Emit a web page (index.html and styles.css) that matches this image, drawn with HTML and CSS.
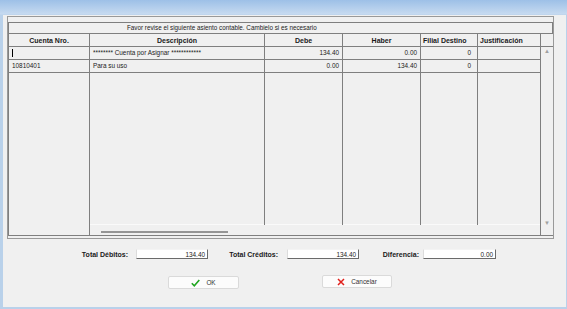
FILE: index.html
```html
<!DOCTYPE html>
<html lang="es">
<head>
    <meta charset="UTF-8">
    <title>Asiento contable</title>
    <link rel="stylesheet" href="styles.css">
</head>
<body>
    <div class="window">
        <div class="client">
            <div class="frame">
                <div class="caption">Favor revise el siguiente asiento contable. Cambielo si es necesario</div>
                <table class="grid">
                    <colgroup>
                        <col style="width:81px">
                        <col style="width:175px">
                        <col style="width:78px">
                        <col style="width:78px">
                        <col style="width:57px">
                        <col style="width:63px">
                        <col style="width:13px">
                    </colgroup>
                    <thead>
                        <tr>
                            <th>Cuenta Nro.</th>
                            <th>Descripción</th>
                            <th>Debe</th>
                            <th>Haber</th>
                            <th class="left">Filial Destino</th>
                            <th class="left">Justificación</th>
                            <th class="sb-head"></th>
                        </tr>
                    </thead>
                    <tbody>
                        <tr class="row">
                            <td><span class="caret"></span></td>
                            <td>******** Cuenta por Asignar ************</td>
                            <td class="num">134.40</td>
                            <td class="num">0.00</td>
                            <td class="num filial">0</td>
                            <td></td>
                            <td class="vscroll" rowspan="4">
                                <div class="vs-inner">
                                    <span class="arrow">&#9650;</span>
                                    <span class="arrow">&#9660;</span>
                                </div>
                            </td>
                        </tr>
                        <tr class="row">
                            <td>10810401</td>
                            <td>Para su uso</td>
                            <td class="num">0.00</td>
                            <td class="num">134.40</td>
                            <td class="num filial">0</td>
                            <td></td>
                        </tr>
                        <tr class="filler">
                            <td class="first"></td>
                            <td></td>
                            <td></td>
                            <td></td>
                            <td></td>
                            <td></td>
                        </tr>
                        <tr class="hscroll">
                            <td class="first"></td>
                            <td colspan="5"><div class="thumb"></div></td>
                        </tr>
                    </tbody>
                </table>
            </div>

            <div class="totals">
                <label class="lbl-debitos">Total Débitos:</label>
                <div class="field">134.40</div>
                <label class="lbl-creditos">Total Créditos:</label>
                <div class="field">134.40</div>
                <label class="lbl-dif">Diferencia:</label>
                <div class="field">0.00</div>
            </div>

            <div class="buttons">
                <button class="btn btn-ok">
                    <svg width="9" height="8" viewBox="0 0 9 8"><path d="M0.8 4.2 L3.3 6.8 L8.3 1" fill="none" stroke="#1fa51f" stroke-width="1.6"/></svg>
                    OK
                </button>
                <button class="btn btn-cancel">
                    <svg width="8" height="8" viewBox="0 0 8 8"><path d="M1 1 L7 7 M7 1 L1 7" fill="none" stroke="#e0201c" stroke-width="1.5"/></svg>
                    Cancelar
                </button>
            </div>
        </div>
    </div>
</body>
</html>
```

FILE: styles.css
```css
body {
    margin: 0;
    padding: 0;
    font-family: 'Liberation Sans', Arial, sans-serif;
    color: #1a1a1a;
}

.window {
    width: 567px;
    height: 309px;
    box-sizing: border-box;
    padding: 15px 1px 2px 3px;
    background: linear-gradient(#9dc0e7, #c6daf0 14px, #b9d1ea 15px);
}

.client {
    height: 100%;
    box-sizing: border-box;
    background-color: #f0f0f0;
    padding: 1px 0 0 4px;
}

.frame {
    width: 547px;
    height: 223px;
    box-sizing: border-box;
    border: 1px solid #999;
    padding-top: 5px;
    overflow: hidden;
}

.caption {
    height: 11px;
    box-sizing: border-box;
    border: 1px solid #7f7f7f;
    border-bottom: none;
    width: 545px;
    font-size: 6.3px;
    line-height: 10px;
    padding-left: 118px;
}

.grid {
    border-collapse: collapse;
    table-layout: fixed;
    width: 545px;
    font-size: 6.4px;
}

.grid th,
.grid td {
    border: 1px solid #7f7f7f;
    padding: 0 3px;
    overflow: hidden;
    white-space: nowrap;
}

.grid th {
    height: 12px;
    font-size: 7px;
    font-weight: bold;
    text-align: center;
}

.grid th.left {
    text-align: left;
    padding-left: 2px;
}

.grid .row td {
    height: 12px;
    line-height: 12px;
}

.grid td.num {
    text-align: right;
}

.grid td.filial {
    padding-right: 6px;
}

.caret {
    display: inline-block;
    width: 1px;
    height: 8px;
    background-color: #000;
    vertical-align: middle;
}

.grid .filler td {
    height: 151px;
    border-bottom: none;
}

.grid .hscroll td {
    height: 10px;
    border-top: none;
    padding: 0;
}

.grid .hscroll td + td {
    border-top: 1px solid #fafafa;
    border-right: none;
}

.thumb {
    width: 127px;
    height: 2px;
    margin: 3px 0 0 11px;
    background-color: #959595;
}

.grid td.vscroll {
    border-top: none;
    border-bottom: 1px solid #7f7f7f;
    padding: 0;
    vertical-align: top;
    background-color: #f0f0f0;
}

.vs-inner {
    height: 178px;
    display: flex;
    flex-direction: column;
    justify-content: space-between;
    align-items: center;
    padding-top: 1px;
}

.arrow {
    font-size: 6px;
    line-height: 6px;
    color: #a0a0a0;
}

.totals {
    display: grid;
    grid-template-columns: 56px 72px 79px 72px 64px 73px;
    align-items: center;
    margin-top: 10px;
    padding-left: 73px;
}

.totals label {
    font-size: 7px;
    font-weight: bold;
    text-align: right;
}

.lbl-debitos {
    padding-right: 8px;
}

.lbl-creditos {
    padding-right: 9px;
}

.lbl-dif {
    padding-right: 4px;
}

.field {
    height: 10px;
    box-sizing: border-box;
    background-color: #fff;
    border-top: 1px solid #f4f4f4;
    border-left: 1px solid #dcdcdc;
    border-bottom: 1px solid #6a6a6a;
    border-right: 1px solid #6a6a6a;
    font-size: 6.4px;
    line-height: 9px;
    text-align: right;
    padding-right: 2px;
}

.buttons {
    display: flex;
    align-items: flex-start;
    gap: 83px;
    margin-top: 16px;
    padding-left: 161px;
}

.btn {
    display: flex;
    align-items: center;
    justify-content: center;
    gap: 6px;
    width: 71px;
    height: 13px;
    padding: 0;
    border: 1px solid #dadada;
    border-radius: 2px;
    background-color: #fcfcfc;
    font-family: 'Liberation Sans', Arial, sans-serif;
    font-size: 6.4px;
    color: #333;
}

.btn-ok {
    margin-top: 1px;
}

.btn-cancel {
    width: 70px;
}
```
